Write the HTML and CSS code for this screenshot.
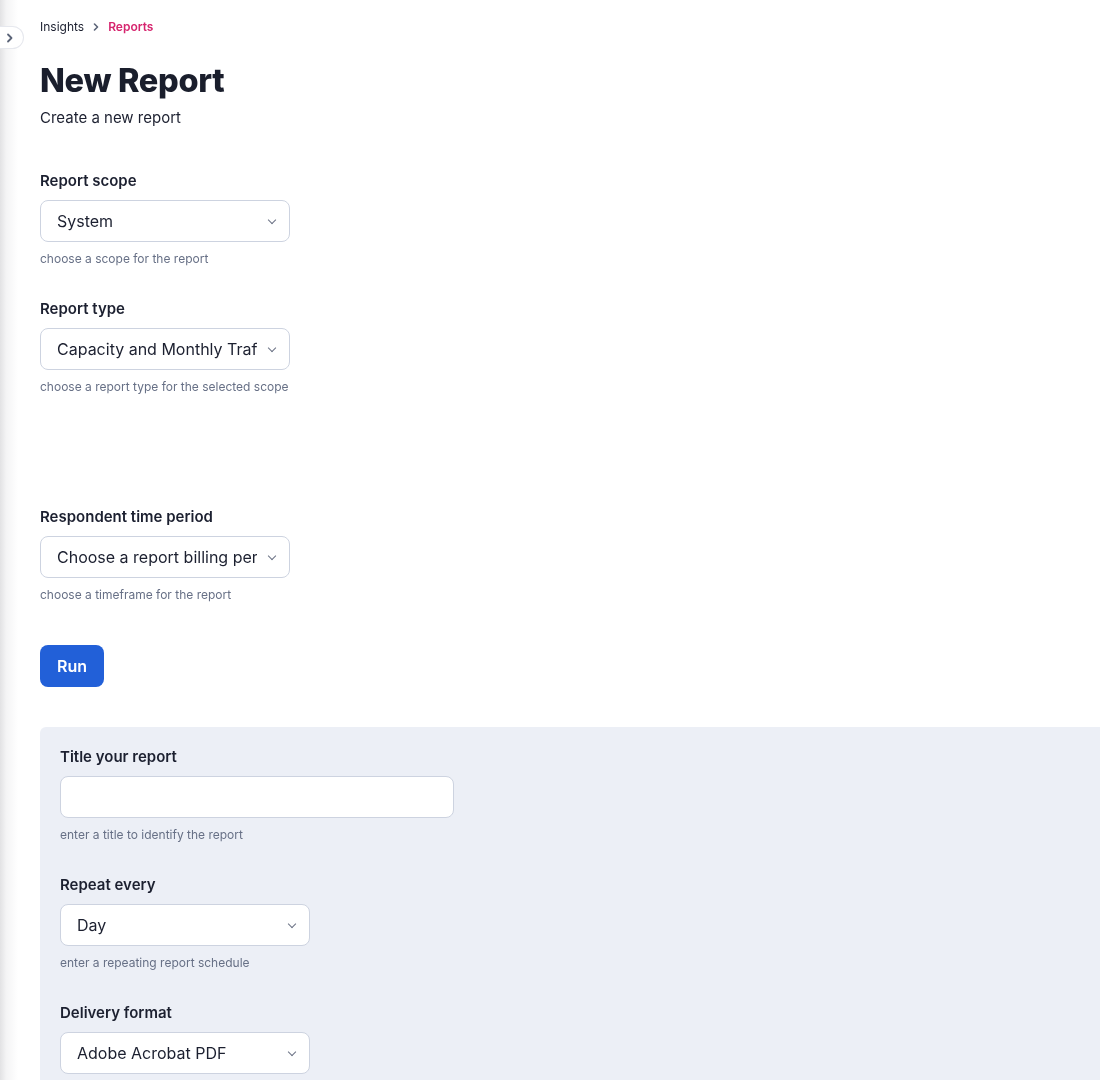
FILE: index.html
```html
<!DOCTYPE html>
<html lang="en">
<head>
    <meta charset="UTF-8">
    <meta name="viewport" content="width=device-width, initial-scale=1.0">
    <title>New Report</title>
    <link rel="stylesheet" href="styles.css">
</head>
<body>
<div class="edge"></div>
<button class="sidebar-toggle" type="button" aria-label="Open sidebar">
    <svg width="10" height="10" viewBox="0 0 10 10"><path d="M3 1.5 6.5 5 3 8.5" fill="none" stroke="currentColor" stroke-width="1.8" stroke-linecap="round" stroke-linejoin="round"/></svg>
</button>

<main class="page">
    <nav class="crumbs">
        <a href="#">Insights</a>
        <svg class="crumb-sep" width="8" height="8" viewBox="0 0 8 8"><path d="M2.5 1 5.5 4 2.5 7" fill="none" stroke="currentColor" stroke-width="1.6" stroke-linecap="round" stroke-linejoin="round"/></svg>
        <a href="#" class="current">Reports</a>
    </nav>

    <h1 class="title">New Report</h1>
    <p class="subtitle">Create a new report</p>

    <form class="report-form">
        <div class="field">
            <label for="scope">Report scope</label>
            <div class="select">
                <select id="scope">
                    <option>System</option>
                </select>
            </div>
            <small>choose a scope for the report</small>
        </div>

        <div class="field">
            <label for="type">Report type</label>
            <div class="select">
                <select id="type">
                    <option>Capacity and Monthly Traffic</option>
                </select>
            </div>
            <small>choose a report type for the selected scope</small>
        </div>

        <div class="spacer"></div>

        <div class="field">
            <label for="period">Respondent time period</label>
            <div class="select">
                <select id="period">
                    <option>Choose a report billing period</option>
                </select>
            </div>
            <small>choose a timeframe for the report</small>
        </div>

        <button type="button" class="run">Run</button>

        <section class="schedule">
            <div class="field">
                <label for="title">Title your report</label>
                <input id="title" type="text" class="text-input">
                <small>enter a title to identify the report</small>
            </div>

            <div class="field">
                <label for="repeat">Repeat every</label>
                <div class="select">
                    <select id="repeat">
                        <option>Day</option>
                        <option>Week</option>
                        <option>Month</option>
                    </select>
                </div>
                <small>enter a repeating report schedule</small>
            </div>

            <div class="field">
                <label for="format">Delivery format</label>
                <div class="select">
                    <select id="format">
                        <option>Adobe Acrobat PDF</option>
                        <option>CSV</option>
                    </select>
                </div>
            </div>
        </section>
    </form>
</main>
</body>
</html>
```

FILE: styles.css
```css
html,
body {
    margin: 0;
    padding: 0;
    background: #fff;
    font-family: Inter, "Noto Sans", sans-serif;
    color: #1c2030;
}

/* faint shadow cast by the collapsed sidebar */
.edge {
    position: fixed;
    top: 0;
    left: 0;
    bottom: 0;
    width: 18px;
    background: linear-gradient(to right, #e2e2e4, #f4f4f5 35%, #fff);
}

.sidebar-toggle {
    position: absolute;
    top: 26px;
    left: 0;
    width: 24px;
    height: 23px;
    padding: 0 0 0 5px;
    display: flex;
    align-items: center;
    justify-content: flex-start;
    background: #fff;
    border: 1px solid #e6e8ee;
    border-left: 0;
    border-radius: 0 12px 12px 0;
    color: #5b6478;
    cursor: pointer;
}

.page {
    position: relative;
    padding: 19px 0 0 40px;
}

.crumbs {
    display: flex;
    align-items: center;
    gap: 8px;
    font-size: 12px;
    line-height: 16px;
}

.crumbs a {
    color: #1c2030;
    text-decoration: none;
}

.crumbs a.current {
    color: #d6246e;
    font-weight: 600;
}

.crumb-sep {
    color: #5b6478;
}

.title {
    margin: 26px 0 0;
    font-size: 32.5px;
    line-height: 40px;
    font-weight: 800;
    letter-spacing: -0.3px;
    color: #1a1e2c;
}

.subtitle {
    margin: 7px 0 0;
    font-size: 15px;
    line-height: 20px;
}

.report-form {
    margin-top: 43px;
    display: flex;
    flex-direction: column;
    align-items: flex-start;
}

.field {
    display: flex;
    flex-direction: column;
    align-items: flex-start;
    margin-bottom: 32px;
}

.field label {
    font-size: 15px;
    line-height: 20px;
    font-weight: 600;
    margin-bottom: 9px;
}

.field small {
    margin-top: 9px;
    font-size: 12px;
    line-height: 16px;
    color: #677086;
}

.select {
    position: relative;
    width: 250px;
}

.select::after {
    content: "";
    position: absolute;
    right: 15px;
    top: 17px;
    width: 5px;
    height: 5px;
    border: solid #6b7285;
    border-width: 0 1.3px 1.3px 0;
    transform: rotate(45deg);
    pointer-events: none;
}

.select select,
.text-input {
    box-sizing: border-box;
    width: 100%;
    height: 42px;
    margin: 0;
    padding: 0 32px 0 16px;
    background: #fff;
    border: 1px solid #cdd3e0;
    border-radius: 8px;
    font-family: inherit;
    font-size: 16px;
    color: #1c2030;
    appearance: none;
    -webkit-appearance: none;
    outline: none;
}

.text-input {
    width: 394px;
    padding-right: 16px;
}

.spacer {
    height: 80px;
}

.run {
    margin-top: 10px;
    width: 64px;
    height: 42px;
    border: 0;
    border-radius: 8px;
    background: #2260d8;
    color: #fff;
    font-family: inherit;
    font-size: 16px;
    font-weight: 600;
    cursor: pointer;
}

.schedule {
    align-self: stretch;
    margin-top: 40px;
    padding: 20px 20px 8px;
    background: #eceff6;
    border-radius: 6px 0 0 0;
}
```
